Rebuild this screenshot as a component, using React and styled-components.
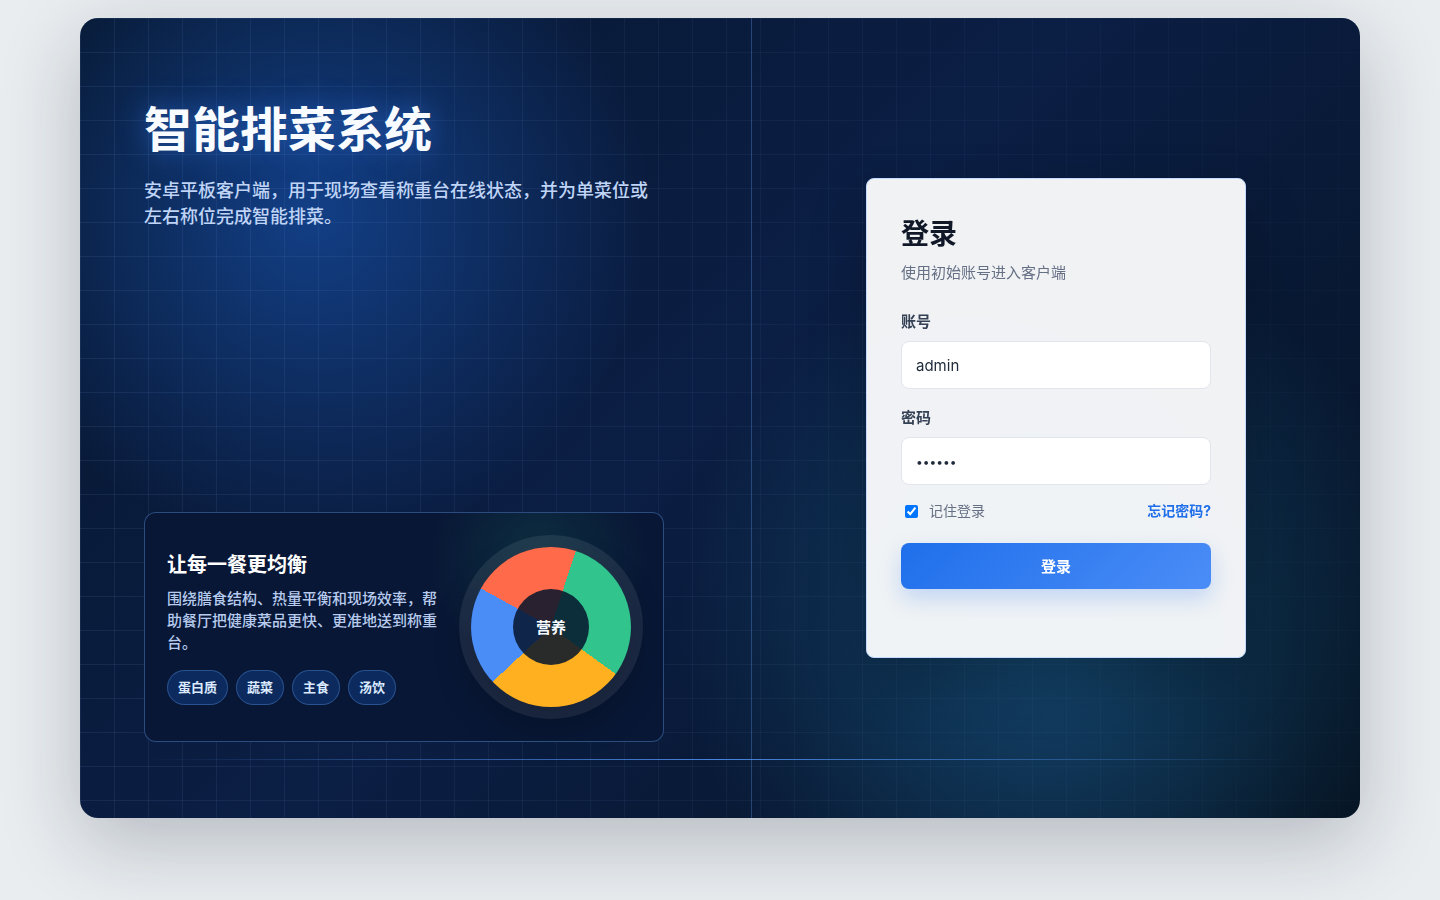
import React, {useState} from "react";
import styled, {createGlobalStyle} from "styled-components";

const GlobalStyle = createGlobalStyle`
  * {
    box-sizing: border-box;
  }

  body {
    margin: 0;
    min-height: 100vh;
    background: #e9edf0;
    font-family: Inter, "Noto Sans CJK SC", sans-serif;
    color: #111827;
  }

  h1, h2, h3, p, ul {
    margin: 0;
    padding: 0;
  }

  button, input {
    font: inherit;
  }
`

const Page = styled.div`
  padding: 18px;
`

const Shell = styled.main`
  position: relative;
  display: grid;
  grid-template-columns: 1.05fr 0.95fr;
  max-width: 1280px;
  min-height: 800px;
  margin: 0 auto;
  overflow: hidden;
  border-radius: 18px;
  background:
    radial-gradient(circle at 18% 24%, rgba(31, 111, 235, 0.44), transparent 28%),
    radial-gradient(circle at 76% 88%, rgba(37, 99, 190, 0.12), transparent 22%),
    radial-gradient(circle at 76% 75%, rgba(32, 136, 176, 0.36), transparent 33%),
    linear-gradient(135deg, #07172f 0%, #0b1e44 48%, #061322 100%);
  box-shadow: 0 24px 80px rgba(15, 23, 42, 0.24);

  &::before {
    content: "";
    position: absolute;
    inset: 0;
    background-image:
      linear-gradient(rgba(148, 190, 255, 0.09) 1px, transparent 1px),
      linear-gradient(90deg, rgba(148, 190, 255, 0.09) 1px, transparent 1px);
    background-size: 34px 34px;
    mask-image: linear-gradient(90deg, #000, rgba(0, 0, 0, 0.25));
  }

  &::after {
    content: "";
    position: absolute;
    left: 64px;
    right: 64px;
    bottom: 58px;
    height: 1px;
    background: linear-gradient(90deg, transparent, rgba(84, 150, 250, 0.85), transparent);
  }
`

const Intro = styled.section`
  position: relative;
  display: flex;
  flex-direction: column;
  justify-content: space-between;
  padding: 76px 64px;
  border-right: 1px solid rgba(96, 150, 230, 0.34);
`

const SystemName = styled.h1`
  font-size: 48px;
  line-height: 72px;
  font-weight: 700;
  color: #f8fbff;
  text-shadow: 0 0 28px rgba(59, 130, 246, 0.55);
`

const Summary = styled.p`
  max-width: 520px;
  margin-top: 12px;
  font-size: 18px;
  line-height: 26px;
  font-weight: 500;
  color: #bfd4f6;
`

const MealCard = styled.div`
  display: grid;
  grid-template-columns: 1fr 180px;
  gap: 22px;
  align-items: center;
  max-width: 520px;
  min-height: 230px;
  padding: 22px;
  border: 1px solid rgba(96, 150, 230, 0.42);
  border-radius: 12px;
  background:
    radial-gradient(circle at 76% 20%, rgba(49, 196, 141, 0.14), transparent 25%),
    #081735;
`

const MealTitle = styled.h2`
  font-size: 20px;
  line-height: 30px;
  font-weight: 700;
  color: #fff;
`

const MealText = styled.p`
  margin: 8px 0 16px;
  font-size: 15px;
  line-height: 22px;
  font-weight: 500;
  color: #b7cbee;
`

const TagList = styled.ul`
  display: flex;
  flex-wrap: wrap;
  gap: 8px;
  list-style: none;
`

const Tag = styled.li`
  padding: 7px 10px;
  border: 1px solid rgba(96, 165, 250, 0.32);
  border-radius: 18px;
  background: #0d2a5e;
  font-size: 13px;
  line-height: 19px;
  font-weight: 700;
  color: #dbeafe;
`

const Plate = styled.div`
  display: grid;
  place-items: center;
  justify-self: center;
  width: 160px;
  height: 160px;
  border-radius: 50%;
  background: conic-gradient(from 18deg, #31c48d 0 30%, #ffb020 30% 58%, #4b8df7 58% 78%, #ff6b4a 78% 100%);
  box-shadow: 0 0 0 12px rgba(255, 255, 255, 0.08), 0 18px 38px rgba(0, 0, 0, 0.24);
`

const PlateCenter = styled.div`
  display: grid;
  place-items: center;
  width: 76px;
  height: 76px;
  padding-bottom: 2px;
  border-radius: 50%;
  background: rgba(6, 20, 44, 0.86);
  font-size: 15px;
  font-weight: 700;
  color: #f8fbff;
`

const LoginSide = styled.section`
  position: relative;
  display: grid;
  place-items: center;
  padding: 32px;
`

const LoginCard = styled.form`
  display: flex;
  flex-direction: column;
  width: 100%;
  max-width: 380px;
  min-height: 480px;
  padding: 34px;
  border: 1px solid #c3dafc;
  border-radius: 8px;
  background: rgba(250, 251, 252, 0.96);
  backdrop-filter: blur(16px);
  box-shadow: 0 24px 60px rgba(0, 0, 0, 0.2);
`

const LoginTitle = styled.h2`
  font-size: 28px;
  line-height: 42px;
  font-weight: 700;
  color: #111827;
`

const LoginHint = styled.p`
  margin: 7px 0 27px;
  font-size: 15px;
  line-height: 22px;
  color: #667085;
`

const Fields = styled.div`
  display: grid;
  gap: 18px;
  margin-bottom: 16px;
`

const Field = styled.label`
  display: grid;
  gap: 8px;
  font-size: 15px;
  line-height: 22px;
  font-weight: 600;
  color: #344054;
`

const TextInput = styled.input`
  width: 100%;
  height: 48px;
  padding: 0 14px;
  border: 1px solid #e1e5ec;
  border-radius: 8px;
  outline: none;
  background: #fff;
  font-weight: 400;
  color: #1d2939;

  &[type="password"] {
    font-size: 12px;
  }
`

const Options = styled.div`
  display: flex;
  align-items: center;
  justify-content: space-between;
  margin-bottom: 22px;
  font-size: 14px;
  line-height: 20px;
`

const Remember = styled.label`
  display: flex;
  align-items: center;
  gap: 8px;
  color: #667085;
`

const ForgotLink = styled.a`
  font-weight: 700;
  color: #1f6feb;
  text-decoration: none;
`

const LoginButton = styled.button`
  height: 46px;
  padding: 0 0 2px;
  border: 0;
  border-radius: 8px;
  background: linear-gradient(135deg, #1f6feb, #4b8df7);
  box-shadow: 0 10px 22px rgba(31, 111, 235, 0.22);
  font-size: 15px;
  font-weight: 700;
  color: #fff;
  cursor: pointer;
`

const tags = ["蛋白质", "蔬菜", "主食", "汤饮"];

const LoginForm = () => {
    const [account, setAccount] = useState("admin");
    const [password, setPassword] = useState("123456");
    const [remember, setRemember] = useState(true);

    return (
        <LoginCard onSubmit={(e) => {e.preventDefault()}}>
            <LoginTitle>登录</LoginTitle>
            <LoginHint>使用初始账号进入客户端</LoginHint>
            <Fields>
                <Field>
                    账号
                    <TextInput type="text" value={account} onChange={(e) => {setAccount(e.target.value)}}/>
                </Field>
                <Field>
                    密码
                    <TextInput type="password" value={password} onChange={(e) => {setPassword(e.target.value)}}/>
                </Field>
            </Fields>
            <Options>
                <Remember>
                    <input type="checkbox" checked={remember} onChange={(e) => {setRemember(e.target.checked)}}/>
                    记住登录
                </Remember>
                <ForgotLink href="#forgot">忘记密码?</ForgotLink>
            </Options>
            <LoginButton type="submit">登录</LoginButton>
        </LoginCard>
    )
}

const App = () => {
    return (
        <Page>
            <GlobalStyle/>
            <Shell>
                <Intro>
                    <div>
                        <SystemName>智能排菜系统</SystemName>
                        <Summary>安卓平板客户端，用于现场查看称重台在线状态，并为单菜位或左右称位完成智能排菜。</Summary>
                    </div>
                    <MealCard>
                        <div>
                            <MealTitle>让每一餐更均衡</MealTitle>
                            <MealText>围绕膳食结构、热量平衡和现场效率，帮助餐厅把健康菜品更快、更准地送到称重台。</MealText>
                            <TagList>
                                {tags.map(tag => <Tag key={tag}>{tag}</Tag>)}
                            </TagList>
                        </div>
                        <Plate>
                            <PlateCenter>营养</PlateCenter>
                        </Plate>
                    </MealCard>
                </Intro>
                <LoginSide>
                    <LoginForm/>
                </LoginSide>
            </Shell>
        </Page>
    )
}

export default App
